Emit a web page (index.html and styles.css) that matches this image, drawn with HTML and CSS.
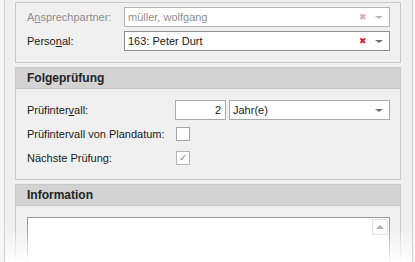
FILE: index.html
```html
<!DOCTYPE html>
<html lang="de">
<head>
    <meta charset="UTF-8">
    <title>Prüfung</title>
    <link rel="stylesheet" href="styles.css">
</head>
<body>
    <div class="window">
        <div class="group group-top">
            <div class="form form-narrow">
                <label class="disabled">A<u>n</u>sprechpartner:</label>
                <div class="combo combo-disabled">
                    <span class="combo-text">müller, wolfgang</span>
                    <span class="clear">&#x2716;</span>
                    <span class="arrow"></span>
                </div>
                <label>Perso<u>n</u>al:</label>
                <div class="combo combo-strong">
                    <span class="combo-text">163: Peter Durt</span>
                    <span class="clear">&#x2716;</span>
                    <span class="arrow"></span>
                </div>
            </div>
        </div>

        <div class="group">
            <div class="group-head">Folgeprüfung</div>
            <div class="group-body">
                <div class="form form-wide">
                    <label>Prüfinter<u>v</u>all:</label>
                    <div class="interval">
                        <div class="number">2</div>
                        <div class="combo">
                            <span class="combo-text">Jahr(e)</span>
                            <span class="arrow"></span>
                        </div>
                    </div>
                    <label>Prüfintervall von Plandatum:</label>
                    <div><span class="check"></span></div>
                    <label>Nächste Prüfung:</label>
                    <div><span class="check check-on">&#x2713;</span></div>
                </div>
            </div>
        </div>

        <div class="group">
            <div class="group-head">Information</div>
            <div class="group-body group-memo">
                <div class="memo">
                    <div class="memo-text"></div>
                    <div class="scrollbar">
                        <span class="scroll-up"></span>
                    </div>
                </div>
            </div>
        </div>

        <div class="fade"></div>
    </div>
</body>
</html>
```

FILE: styles.css
```css
body {
    margin: 0;
    background: #f6f6f6;
    font-family: "Liberation Sans", Arial, sans-serif;
    font-size: 11px;
    color: #1a1a1a;
    overflow: hidden;
}
.window {
    position: relative;
    height: 262px;
    margin: 0 2px 0 4px;
    padding: 2px 11px 0 10px;
    border-left: 1px solid #d2d2d2;
    border-right: 1px solid #d2d2d2;
    background: #f0f0f0;
    overflow: hidden;
}
.group {
    border: 1px solid #c9c9c9;
    margin-bottom: 4px;
}
.group-top {
    padding: 4px 10px 11px 11px;
}
.group-head {
    height: 20px;
    line-height: 20px;
    padding-left: 11px;
    background: #d3d3d3;
    border-bottom: 1px solid #c4c4c4;
    font-size: 12px;
    font-weight: bold;
    color: #222;
}
.group-body {
    padding: 9px 10px 9px 11px;
}
.group-memo {
    padding-top: 11px;
}
.form {
    display: grid;
    align-items: center;
}
.form-narrow {
    grid-template-columns: 97px 1fr;
    row-gap: 4px;
}
.form-wide {
    grid-template-columns: 148px 1fr;
    grid-auto-rows: 24px;
}
label.disabled {
    color: #8e8e8e;
}
.combo {
    display: flex;
    align-items: center;
    height: 18px;
    border: 1px solid #b4b4b4;
    background: #fff;
}
.combo-strong {
    border-color: #8f8f8f;
}
.combo-text {
    flex: 1;
    padding-left: 3px;
}
.combo-disabled .combo-text {
    color: #8e8e8e;
}
.clear {
    font-size: 9px;
    color: #c8283c;
    margin-right: 8px;
}
.combo-disabled .clear {
    color: #e4a3ae;
}
.arrow {
    width: 0;
    height: 0;
    margin-right: 6px;
    border-left: 4px solid transparent;
    border-right: 4px solid transparent;
    border-top: 3px solid #6e6e6e;
}
.combo-disabled .arrow {
    border-top-color: #b8b8b8;
}
.interval {
    display: flex;
    gap: 3px;
}
.number {
    width: 45px;
    height: 18px;
    line-height: 18px;
    padding-right: 4px;
    text-align: right;
    border: 1px solid #a8a8a8;
    background: #fff;
}
.interval .combo {
    flex: 1;
    border-color: #a8a8a8;
}
.check {
    display: block;
    width: 12px;
    height: 12px;
    margin-left: 1px;
    border: 1px solid #a4a4a4;
    background: #fff;
    font-size: 10px;
    line-height: 12px;
    text-align: center;
    color: #8a8a8a;
}
.check-on {
    border-color: #b4b4b4;
}
.memo {
    display: flex;
    height: 60px;
    border: 1px solid #9c9c9c;
    border-bottom: none;
    background: #fff;
}
.memo-text {
    flex: 1;
}
.scrollbar {
    width: 16px;
    padding: 1px 1px 0 0;
}
.scroll-up {
    display: flex;
    align-items: center;
    justify-content: center;
    height: 14px;
    border: 1px solid #e2e2e2;
    background: #fbfbfb;
}
.scroll-up::after {
    content: "";
    border-left: 4px solid transparent;
    border-right: 4px solid transparent;
    border-bottom: 4px solid #b0b0b0;
}
.fade {
    position: absolute;
    left: -5px;
    right: -3px;
    bottom: 0;
    height: 36px;
    background: linear-gradient(rgba(255, 255, 255, 0), #fff 95%);
}
```
